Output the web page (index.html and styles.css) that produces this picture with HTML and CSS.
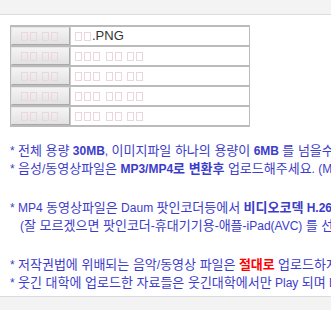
FILE: index.html
```html
<!DOCTYPE html>
<html lang="ko">

<head>
    <meta charset="UTF-8">
    <title>업로드</title>
    <link rel="stylesheet" href="styles.css">
</head>

<body>
    <div class="topbar"></div>

    <div class="upload">
        <div class="row">
            <div class="btn"><span class="t"></span><span class="t"></span> <span class="t"></span><span class="t"></span></div>
            <div class="field"><span class="t"></span><span class="t"></span><span class="name">.PNG</span></div>
        </div>
        <div class="row">
            <div class="btn"><span class="t"></span><span class="t"></span> <span class="t"></span><span class="t"></span></div>
            <div class="field"><span class="t"></span><span class="t"></span><span class="t"></span> <span class="t"></span><span class="t"></span> <span class="t"></span><span class="t"></span></div>
        </div>
        <div class="row">
            <div class="btn"><span class="t"></span><span class="t"></span> <span class="t"></span><span class="t"></span></div>
            <div class="field"><span class="t"></span><span class="t"></span><span class="t"></span> <span class="t"></span><span class="t"></span> <span class="t"></span><span class="t"></span></div>
        </div>
        <div class="row">
            <div class="btn"><span class="t"></span><span class="t"></span> <span class="t"></span><span class="t"></span></div>
            <div class="field"><span class="t"></span><span class="t"></span><span class="t"></span> <span class="t"></span><span class="t"></span> <span class="t"></span><span class="t"></span></div>
        </div>
        <div class="row">
            <div class="btn"><span class="t"></span><span class="t"></span> <span class="t"></span><span class="t"></span></div>
            <div class="field"><span class="t"></span><span class="t"></span><span class="t"></span> <span class="t"></span><span class="t"></span> <span class="t"></span><span class="t"></span></div>
        </div>
    </div>

    <div class="notice">
        <p>* <span class="k">전체 용량</span> <b>30MB</b>, <span class="k">이미지파일 하나의 용량이</span> <b>6MB</b> <span class="k">를 넘을수 없습니다</span>.</p>
        <p>* <span class="k">음성</span>/<span class="k">동영상파일은</span> <b>MP3/MP4<span class="k">로 변환후</span></b> <span class="k">업로드해주세요</span>. (MP3 128kbps <span class="k">권장</span>)</p>
        <p class="gap">* MP4 <span class="k">동영상파일은</span> Daum <span class="k">팟인코더등에서</span> <b><span class="k">비디오코덱</span> H.264</b> <span class="k">로 변환해주세요</span>.</p>
        <p class="indent">(<span class="k">잘 모르겠으면 팟인코더</span>-<span class="k">휴대기기용</span>-<span class="k">애플</span>-iPad(AVC) <span class="k">를 선택하세요</span>)</p>
        <p class="gap">* <span class="k">저작권법에 위배되는 음악</span>/<span class="k">동영상 파일은</span> <b class="red k">절대로</b> <span class="k">업로드하지 마세요</span>.</p>
        <p>* <span class="k">웃긴 대학에 업로드한 자료들은 웃긴대학에서만</span> Play <span class="k">되며</span> Download <span class="k">는 불가능합니다</span>.</p>
    </div>

    <div class="bottombar"></div>
</body>

</html>
```

FILE: styles.css
```css
* {
    padding: 0;
    margin: 0;
}
body {
    width: 331px;
    height: 310px;
    overflow: hidden;
    background: #fff;
    font-family: "Liberation Sans", "Noto Sans CJK KR", sans-serif;
    font-size: 12px;
}
.topbar {
    height: 14px;
    background: #f3f3f3;
    border-bottom: 1px solid #dcdcdc;
}
.upload {
    width: 238px;
    margin: 10px 0 0 10px;
    border-left: 1px solid #bbb;
    border-right: 1px solid #bbb;
    border-bottom: 2px solid #bbb;
}
.row {
    display: flex;
    height: 18px;
    border-top: 2px solid #bbb;
}
.btn {
    width: 57px;
    border: 1px solid #a9a9a9;
    border-top-color: #e6e6e6;
    border-left-color: #e6e6e6;
    background: linear-gradient(#f4f4f4, #e2e2e2);
    text-align: center;
    line-height: 16px;
    font-size: 13px;
    white-space: pre;
}
.field {
    flex: 1;
    padding-left: 4px;
    line-height: 18px;
    font-size: 13px;
    white-space: pre;
    border-left: 1px solid #ccc;
}
.t {
    display: inline-block;
    width: 7px;
    height: 9px;
    margin-right: 2px;
    border: 1px solid #ecd6dc;
    box-sizing: border-box;
    vertical-align: -1px;
}
.name {
    color: #333;
    margin-left: -1px;
}
.notice {
    margin: 15px 0 0 10px;
    height: 154px;
    color: #3c3ccc;
    line-height: 17px;
    white-space: nowrap;
}
.notice p {
    overflow: hidden;
}
.notice .k {
    font-size: 13px;
}
.notice .indent {
    padding-left: 10px;
}
.notice .gap {
    margin-top: 21px;
}
.notice .red {
    color: #ff0000;
}
.bottombar {
    height: 14px;
    background: #f3f3f3;
    border-top: 1px solid #dcdcdc;
}
```
